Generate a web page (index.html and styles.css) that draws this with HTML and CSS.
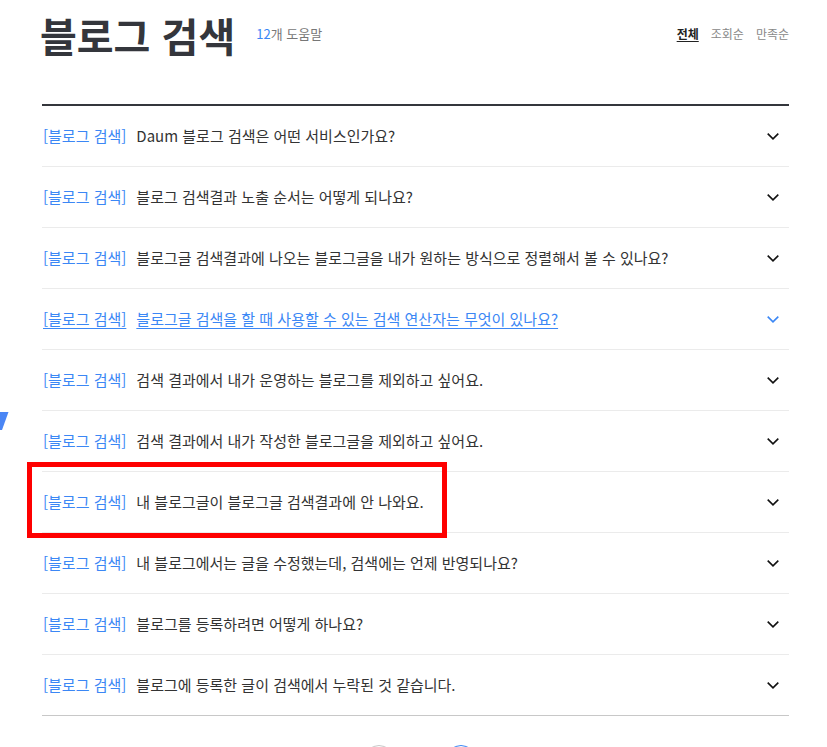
FILE: index.html
```html
<!DOCTYPE html>
<html lang="ko">
<head>
    <meta charset="UTF-8">
    <title>블로그 검색 도움말</title>
    <link rel="stylesheet" href="styles.css">
</head>
<body>
    <div class="page">
        <div class="header">
            <div class="title-wrap">
                <h1 class="title">블로그 검색</h1>
                <span class="count"><em>12</em>개 도움말</span>
            </div>
            <div class="sort">
                <a class="sort-item on">전체</a>
                <a class="sort-item">조회순</a>
                <a class="sort-item">만족순</a>
            </div>
        </div>

        <ul class="faq-list">
            <li class="faq-item"><a class="faq-link"><span class="cate">[블로그 검색]</span><span class="q">Daum 블로그 검색은 어떤 서비스인가요?</span><svg class="arrow" width="12" height="7" viewBox="0 0 12 7"><polyline points="0.7,0.7 6,5.8 11.3,0.7" fill="none" stroke="currentColor" stroke-width="1.6"/></svg></a></li>
            <li class="faq-item"><a class="faq-link"><span class="cate">[블로그 검색]</span><span class="q">블로그 검색결과 노출 순서는 어떻게 되나요?</span><svg class="arrow" width="12" height="7" viewBox="0 0 12 7"><polyline points="0.7,0.7 6,5.8 11.3,0.7" fill="none" stroke="currentColor" stroke-width="1.6"/></svg></a></li>
            <li class="faq-item"><a class="faq-link"><span class="cate">[블로그 검색]</span><span class="q">블로그글 검색결과에 나오는 블로그글을 내가 원하는 방식으로 정렬해서 볼 수 있나요?</span><svg class="arrow" width="12" height="7" viewBox="0 0 12 7"><polyline points="0.7,0.7 6,5.8 11.3,0.7" fill="none" stroke="currentColor" stroke-width="1.6"/></svg></a></li>
            <li class="faq-item hover"><a class="faq-link"><span class="cate">[블로그 검색]</span><span class="q">블로그글 검색을 할 때 사용할 수 있는 검색 연산자는 무엇이 있나요?</span><svg class="arrow" width="12" height="7" viewBox="0 0 12 7"><polyline points="0.7,0.7 6,5.8 11.3,0.7" fill="none" stroke="currentColor" stroke-width="1.6"/></svg></a></li>
            <li class="faq-item"><a class="faq-link"><span class="cate">[블로그 검색]</span><span class="q">검색 결과에서 내가 운영하는 블로그를 제외하고 싶어요.</span><svg class="arrow" width="12" height="7" viewBox="0 0 12 7"><polyline points="0.7,0.7 6,5.8 11.3,0.7" fill="none" stroke="currentColor" stroke-width="1.6"/></svg></a></li>
            <li class="faq-item"><a class="faq-link"><span class="cate">[블로그 검색]</span><span class="q">검색 결과에서 내가 작성한 블로그글을 제외하고 싶어요.</span><svg class="arrow" width="12" height="7" viewBox="0 0 12 7"><polyline points="0.7,0.7 6,5.8 11.3,0.7" fill="none" stroke="currentColor" stroke-width="1.6"/></svg></a></li>
            <li class="faq-item"><a class="faq-link"><span class="cate">[블로그 검색]</span><span class="q">내 블로그글이 블로그글 검색결과에 안 나와요.</span><svg class="arrow" width="12" height="7" viewBox="0 0 12 7"><polyline points="0.7,0.7 6,5.8 11.3,0.7" fill="none" stroke="currentColor" stroke-width="1.6"/></svg></a><div class="mark"></div></li>
            <li class="faq-item"><a class="faq-link"><span class="cate">[블로그 검색]</span><span class="q">내 블로그에서는 글을 수정했는데, 검색에는 언제 반영되나요?</span><svg class="arrow" width="12" height="7" viewBox="0 0 12 7"><polyline points="0.7,0.7 6,5.8 11.3,0.7" fill="none" stroke="currentColor" stroke-width="1.6"/></svg></a></li>
            <li class="faq-item"><a class="faq-link"><span class="cate">[블로그 검색]</span><span class="q">블로그를 등록하려면 어떻게 하나요?</span><svg class="arrow" width="12" height="7" viewBox="0 0 12 7"><polyline points="0.7,0.7 6,5.8 11.3,0.7" fill="none" stroke="currentColor" stroke-width="1.6"/></svg></a></li>
            <li class="faq-item"><a class="faq-link"><span class="cate">[블로그 검색]</span><span class="q">블로그에 등록한 글이 검색에서 누락된 것 같습니다.</span><svg class="arrow" width="12" height="7" viewBox="0 0 12 7"><polyline points="0.7,0.7 6,5.8 11.3,0.7" fill="none" stroke="currentColor" stroke-width="1.6"/></svg></a></li>
        </ul>

        <div class="paging">
            <span class="btn-page prev"></span>
            <span class="btn-page next"></span>
        </div>
    </div>

    <svg class="side-deco" width="10" height="20" viewBox="0 0 10 20"><polygon points="0,0 8.5,0 2,18 0,18" fill="#4a86f5"/></svg>
</body>
</html>
```

FILE: styles.css
```css
html {
    overflow: hidden;
}
body {
    margin: 0;
    font-family: "Noto Sans CJK KR", "Noto Sans", sans-serif;
    color: #333;
    background: #fff;
}
.page {
    padding: 0 38px 0 42px;
}
.header {
    display: flex;
    justify-content: space-between;
    align-items: flex-start;
    height: 104px;
}
.title-wrap {
    display: flex;
    align-items: flex-start;
}
.title {
    margin: 7px 0 0 -2px;
    font-size: 40px;
    line-height: 56px;
    font-weight: bold;
    color: #34363c;
}
.count {
    margin: 24px 0 0 21px;
    font-size: 13px;
    line-height: 20px;
    color: #777;
}
.count em {
    font-style: normal;
    color: #3b87f5;
}
.sort {
    display: flex;
    gap: 12px;
    margin-top: 24px;
}
.sort-item {
    font-size: 12px;
    line-height: 20px;
    color: #888;
    cursor: pointer;
}
.sort-item.on {
    color: #222;
    font-weight: bold;
    text-decoration: underline;
    text-underline-offset: 2px;
}
.faq-list {
    list-style: none;
    margin: 0;
    padding: 0;
    border-top: 2px solid #34363c;
    border-bottom: 1px solid #c8c8c8;
}
.faq-item {
    position: relative;
    border-bottom: 1px solid #ebebeb;
}
.faq-item:last-child {
    border-bottom: none;
}
.faq-link {
    display: flex;
    align-items: center;
    height: 58px;
    padding: 0 10px 2px 1px;
    font-size: 15px;
    color: #333;
    cursor: pointer;
}
.cate {
    color: #3b87f5;
    margin-right: 10px;
    white-space: nowrap;
}
.q {
    flex: 1;
}
.arrow {
    color: #111;
    flex-shrink: 0;
    margin-top: 2px;
}
.faq-item.hover .faq-link,
.faq-item.hover .arrow {
    color: #3b87f5;
}
.faq-item.hover .cate,
.faq-item.hover .q {
    text-decoration: underline;
    text-underline-offset: 3px;
}
.mark {
    position: absolute;
    left: -15px;
    top: -10px;
    width: 410px;
    height: 66px;
    border: 5px solid #fe0000;
    pointer-events: none;
}
.paging {
    display: flex;
    justify-content: center;
    gap: 52px;
    padding: 29px 0 40px 9px;
}
.btn-page {
    width: 28px;
    height: 28px;
    border-radius: 50%;
    border: 1px solid #c8c8c8;
}
.btn-page.next {
    border-color: #3b87f5;
}
.side-deco {
    position: absolute;
    left: 0;
    top: 412px;
}
```
